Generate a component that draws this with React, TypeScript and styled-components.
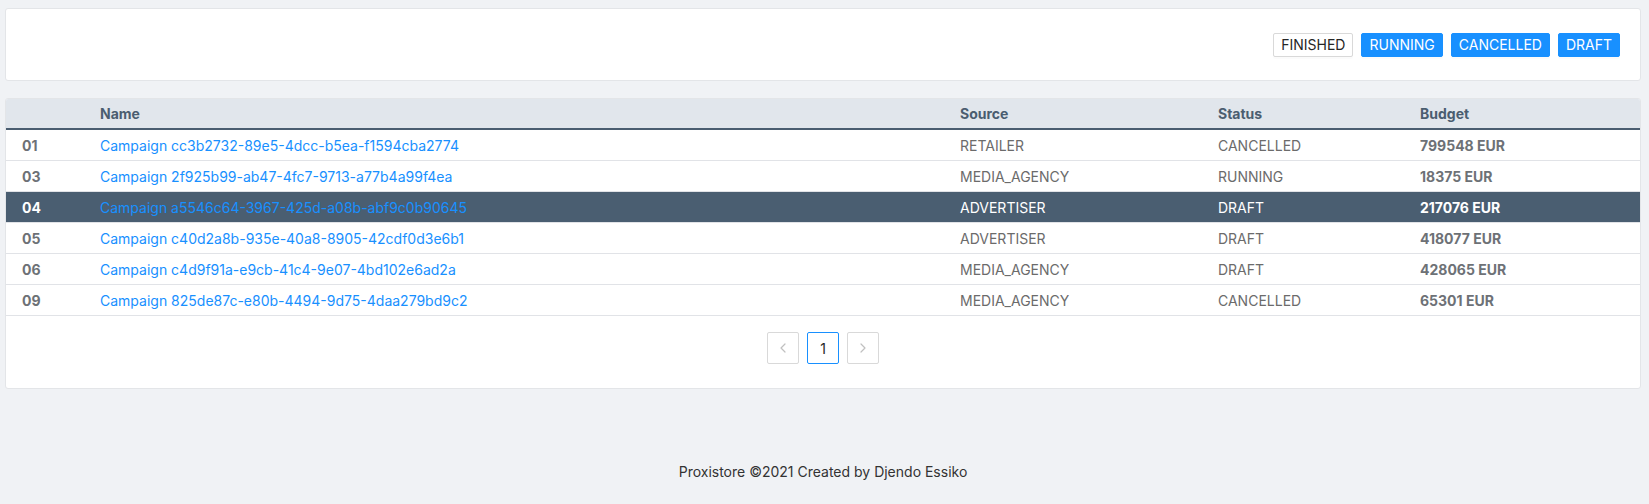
import React from "react";
import styled, { createGlobalStyle } from "styled-components";

const Global = createGlobalStyle`
  html, body { margin: 0; padding: 0; background: #f0f2f5; }
  body { font-family: Inter, "Noto Sans", sans-serif; font-size: 14px; color: #333; }
  * { box-sizing: border-box; }
`;

const Page = styled.div`
  padding: 8px 8px 0 5px;
  display: flex;
  flex-direction: column;
`;

const Card = styled.div`
  background: #fff;
  border: 1px solid #e3e5e8;
  border-radius: 3px;
`;

const FilterCard = styled(Card)`
  height: 73px;
  display: flex;
  align-items: center;
  justify-content: flex-end;
  padding: 0 20px;
  gap: 8px;
`;

const FilterButton = styled.button<{ $active?: boolean }>`
  height: 24px;
  padding: 0 7px;
  border-radius: 2px;
  font-family: inherit;
  font-size: 14px;
  line-height: 22px;
  cursor: pointer;
  border: 1px solid ${(p) => (p.$active ? "#d9d9d9" : "#1890ff")};
  background: ${(p) => (p.$active ? "#fff" : "#1890ff")};
  color: ${(p) => (p.$active ? "#262626" : "#fff")};
  box-shadow: 0 2px 0 rgba(0, 0, 0, 0.015);
`;

const TableCard = styled(Card)`
  margin-top: 17px;
  overflow: hidden;
`;

const Row = styled.div<{ $head?: boolean; $selected?: boolean }>`
  display: grid;
  grid-template-columns: 78px 860px 258px 202px 1fr;
  height: 31px;
  align-items: center;
  background: ${(p) => (p.$head ? "#e1e6ec" : p.$selected ? "#4a5e71" : "#fff")};
  border-bottom: ${(p) => (p.$head ? "2px solid #4a5d70" : "1px solid #e1e3e7")};
  color: ${(p) => (p.$head ? "#4a5d70" : p.$selected ? "#fff" : "#6b6b6b")};
  font-weight: ${(p) => (p.$head ? 700 : 400)};
`;

const Cell = styled.div`
  padding: 0 16px;
  white-space: nowrap;
`;

const StrongCell = styled(Cell)<{ $selected?: boolean }>`
  font-weight: 700;
  color: ${(p) => (p.$selected ? "#fff" : "#6d7176")};
`;

const Link = styled.a`
  color: #1890ff;
  text-decoration: none;
`;

const Pager = styled.div`
  display: flex;
  justify-content: center;
  gap: 8px;
  padding: 16px 0 24px;
`;

const PageItem = styled.div<{ $active?: boolean; $disabled?: boolean }>`
  width: 32px;
  height: 32px;
  border: 1px solid ${(p) => (p.$active ? "#1890ff" : "#d9d9d9")};
  border-radius: 2px;
  display: flex;
  align-items: center;
  justify-content: center;
  color: ${(p) => (p.$disabled ? "#c0c0c0" : "#262626")};
  background: #fff;
`;

const Footer = styled.footer`
  text-align: center;
  padding: 24px 50px;
  margin-top: 48px;
  color: #333;
  font-size: 14px;
  line-height: 22px;
`;

const rows = [
  { id: "01", name: "cc3b2732-89e5-4dcc-b5ea-f1594cba2774", source: "RETAILER", status: "CANCELLED", budget: "799548" },
  { id: "03", name: "2f925b99-ab47-4fc7-9713-a77b4a99f4ea", source: "MEDIA_AGENCY", status: "RUNNING", budget: "18375" },
  { id: "04", name: "a5546c64-3967-425d-a08b-abf9c0b90645", source: "ADVERTISER", status: "DRAFT", budget: "217076", selected: true },
  { id: "05", name: "c40d2a8b-935e-40a8-8905-42cdf0d3e6b1", source: "ADVERTISER", status: "DRAFT", budget: "418077" },
  { id: "06", name: "c4d9f91a-e9cb-41c4-9e07-4bd102e6ad2a", source: "MEDIA_AGENCY", status: "DRAFT", budget: "428065" },
  { id: "09", name: "825de87c-e80b-4494-9d75-4daa279bd9c2", source: "MEDIA_AGENCY", status: "CANCELLED", budget: "65301" },
];

const Chevron = ({ dir }: { dir: "left" | "right" }) => (
  <svg width="8" height="10" viewBox="0 0 8 10" fill="none">
    <path
      d={dir === "left" ? "M6 1 L2 5 L6 9" : "M2 1 L6 5 L2 9"}
      stroke="currentColor"
      strokeWidth="1.2"
      strokeLinecap="round"
      strokeLinejoin="round"
    />
  </svg>
);

export default function App() {
  return (
    <>
      <Global />
      <Page>
        <FilterCard>
          <FilterButton $active>FINISHED</FilterButton>
          <FilterButton>RUNNING</FilterButton>
          <FilterButton>CANCELLED</FilterButton>
          <FilterButton>DRAFT</FilterButton>
        </FilterCard>
        <TableCard>
          <Row $head>
            <Cell />
            <Cell>Name</Cell>
            <Cell>Source</Cell>
            <Cell>Status</Cell>
            <Cell>Budget</Cell>
          </Row>
          {rows.map((r) => (
            <Row key={r.id} $selected={r.selected}>
              <StrongCell $selected={r.selected}>{r.id}</StrongCell>
              <Cell>
                <Link href="#">Campaign {r.name}</Link>
              </Cell>
              <Cell>{r.source}</Cell>
              <Cell>{r.status}</Cell>
              <StrongCell $selected={r.selected}>{r.budget} EUR</StrongCell>
            </Row>
          ))}
          <Pager>
            <PageItem $disabled>
              <Chevron dir="left" />
            </PageItem>
            <PageItem $active>1</PageItem>
            <PageItem $disabled>
              <Chevron dir="right" />
            </PageItem>
          </Pager>
        </TableCard>
        <Footer>Proxistore ©2021 Created by Djendo Essiko</Footer>
      </Page>
    </>
  );
}
